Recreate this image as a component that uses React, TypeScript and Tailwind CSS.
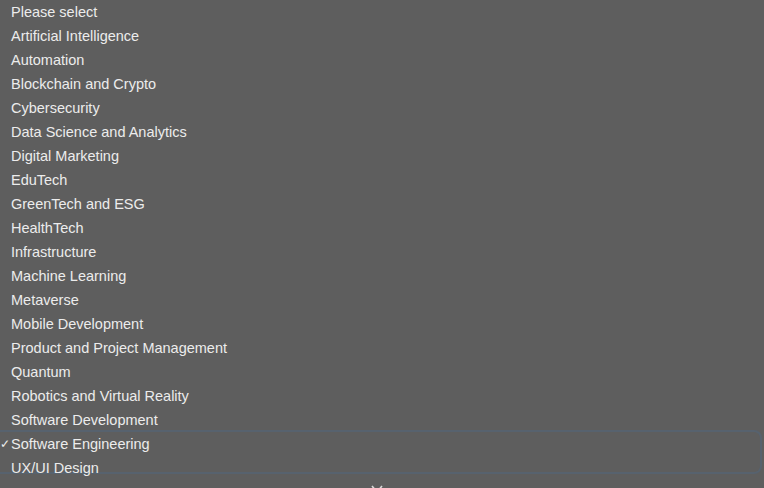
import React from "react";

const options = [
  "Please select",
  "Artificial Intelligence",
  "Automation",
  "Blockchain and Crypto",
  "Cybersecurity",
  "Data Science and Analytics",
  "Digital Marketing",
  "EduTech",
  "GreenTech and ESG",
  "HealthTech",
  "Infrastructure",
  "Machine Learning",
  "Metaverse",
  "Mobile Development",
  "Product and Project Management",
  "Quantum",
  "Robotics and Virtual Reality",
  "Software Development",
  "Software Engineering",
  "UX/UI Design",
];

const selected = "Software Engineering";

export default function App() {
  return (
    <div
      className="relative w-[764px] h-[488px] overflow-hidden bg-[#5e5e5e]"
      style={{ fontFamily: '"Liberation Sans", Arial, sans-serif' }}
    >
      {/* dimmed page behind the open menu: the focused select field */}
      <div className="absolute inset-0 pointer-events-none flex flex-col pt-[430px] pr-[2px]">
        <div className="h-[44px] rounded-r-[8px] border-y-2 border-r-2 border-[#57626e]" />
      </div>

      {/* native option list */}
      <ul className="relative flex flex-col">
        {options.map((o) => (
          <li
            key={o}
            className="relative h-6 flex items-center pl-[11px] text-[14.5px] leading-6 text-[#ececec]"
          >
            {o === selected && (
              <span className="absolute left-0 top-0 text-[12px] leading-6 text-[#ececec]">✓</span>
            )}
            {o}
          </li>
        ))}
      </ul>

      {/* scroll-down indicator, mostly below the visible edge */}
      <div className="absolute left-0 right-0 bottom-0 flex justify-center pr-[10px] translate-y-[7px]">
        <svg width="14" height="10" viewBox="0 0 14 10" fill="none">
          <path d="M2 1 L7 7 L12 1" stroke="#d8d8d8" strokeWidth="1.6" />
        </svg>
      </div>
    </div>
  );
}
